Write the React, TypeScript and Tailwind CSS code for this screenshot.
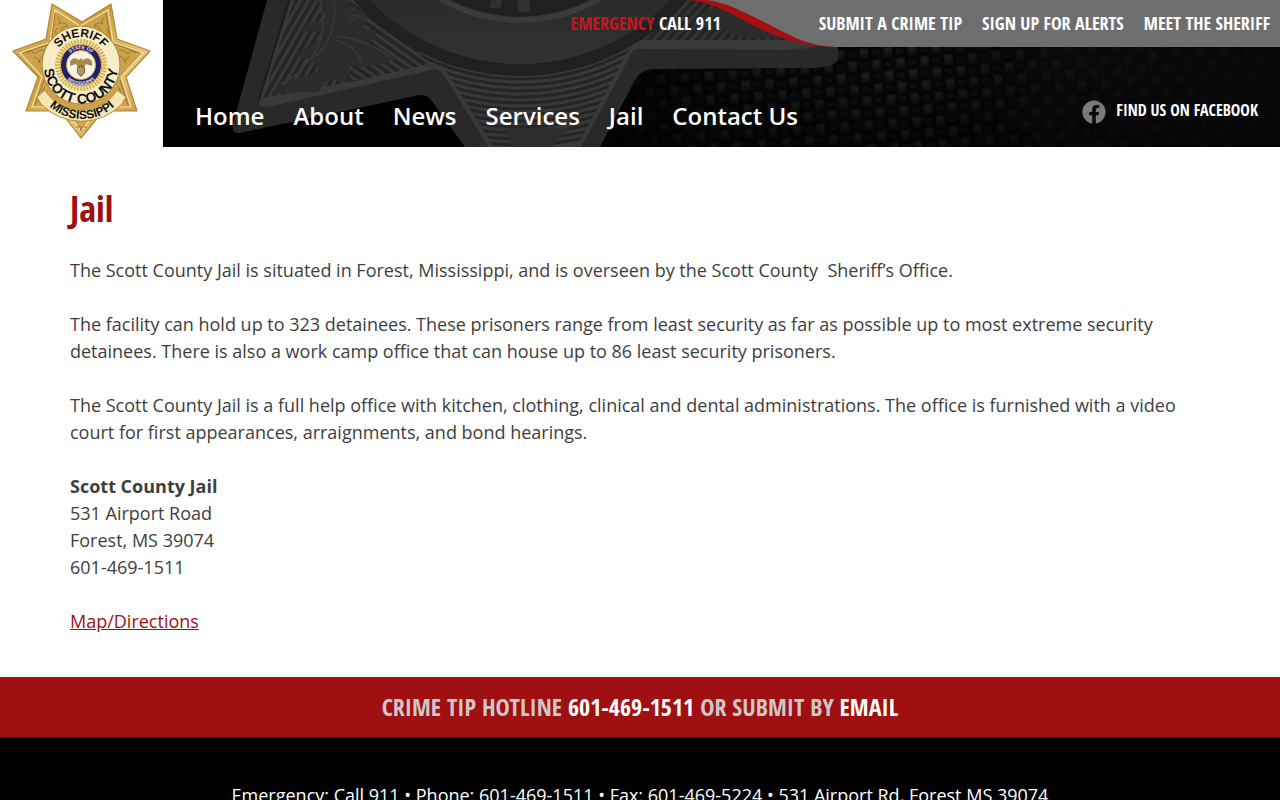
import { FaFacebook } from "react-icons/fa";

const quickLinks = ["Submit a Crime Tip", "Sign Up for Alerts", "Meet the Sheriff"];
const navItems = ["Home", "About", "News", "Services", "Jail", "Contact Us"];

const stripeRadii = [224, 230, 236, 242, 248, 254, 260, 266, 272, 278, 284, 290];
const sunRays = Array.from({ length: 48 }, (_, i) => i * 7.5);

function HeaderArt() {
  return (
    <svg
      className="absolute inset-0 h-full w-full"
      viewBox="0 0 1280 147"
      preserveAspectRatio="xMidYMin slice"
      aria-hidden="true"
    >
      <defs>
        <pattern id="weave" width="24" height="24" patternUnits="userSpaceOnUse" patternTransform="rotate(-4)">
          <rect width="24" height="24" fill="#070707" />
          <g filter="url(#soft)">
            <rect x="2" y="1" width="8" height="10" fill="url(#block)" />
            <rect x="14" y="13" width="8" height="10" fill="url(#block)" />
            <rect x="14" y="3" width="7" height="5" fill="#0f0f0f" />
            <rect x="2" y="15" width="7" height="5" fill="#0f0f0f" />
          </g>
        </pattern>
        <filter id="soft">
          <feGaussianBlur stdDeviation="1" />
        </filter>
        <linearGradient id="block" x1="0" y1="0" x2="0" y2="1">
          <stop offset="0" stopColor="#242424" />
          <stop offset="1" stopColor="#0e0e0e" />
        </linearGradient>
        <linearGradient id="fade">
          <stop offset="0.45" stopColor="#000" />
          <stop offset="0.56" stopColor="#000" stopOpacity="0.2" />
          <stop offset="0.72" stopColor="#000" stopOpacity="0" />
          <stop offset="0.82" stopColor="#0a0a0a" stopOpacity="0.6" />
          <stop offset="1" stopColor="#080808" stopOpacity="0.9" />
        </linearGradient>
        <linearGradient id="depth" x1="0" y1="0" x2="0" y2="1">
          <stop offset="0.5" stopColor="#000" stopOpacity="0" />
          <stop offset="1" stopColor="#000" stopOpacity="0.4" />
        </linearGradient>
        <linearGradient id="night" x1="0" y1="0" x2="0" y2="1">
          <stop offset="0" stopColor="#0b0c10" />
          <stop offset="0.7" stopColor="#000" />
        </linearGradient>
        <linearGradient id="disc" x1="0" y1="0" x2="0" y2="1">
          <stop offset="0.65" stopColor="#232323" />
          <stop offset="1" stopColor="#313131" />
        </linearGradient>
        <pattern id="hatchLeft" width="7" height="7" patternUnits="userSpaceOnUse" patternTransform="rotate(-60)">
          <rect width="7" height="7" fill="#252525" />
          <rect width="7" height="3" fill="#383838" />
        </pattern>
        <pattern id="hatchSide" width="7" height="7" patternUnits="userSpaceOnUse" patternTransform="rotate(35)">
          <rect width="7" height="7" fill="#252525" />
          <rect width="7" height="3" fill="#383838" />
        </pattern>
        <pattern id="hatchRight" width="7" height="7" patternUnits="userSpaceOnUse" patternTransform="rotate(-48)">
          <rect width="7" height="7" fill="#252525" />
          <rect width="7" height="3" fill="#343434" />
        </pattern>
        <clipPath id="lowerArm">
          <path d="M430 66 L444 69 L494 147 H578 L631 48 L640 30 H400 Z" />
        </clipPath>
      </defs>

      <rect width="1280" height="147" fill="url(#night)" />
      <rect x="560" width="720" height="147" fill="url(#weave)" />
      <rect width="1280" height="147" fill="url(#fade)" />
      <rect x="560" width="720" height="147" fill="url(#depth)" />

      <path
        d="M267 0 L233 124 Q231 134 240 133 L415 96 Q426 93 431 100 L465 147 H600 L635 80 Q641 69 654 69 L810 68 Q838 67 838 58 V44 L700 0 Z"
        fill="#292929"
      />
      <path
        d="M291 0 L260 98 Q257 109 268 107 L436 69 L443 73 L489 147 H581 L632 52 Q636 48 645 49 L780 50 Q806 50 826 44 L700 0 Z"
        fill="#393939"
      />
      <path d="M289 0 L259 100" stroke="#1d1d1d" strokeWidth="2" />
      <path d="M294 0 L263 98 L360 80 V0 Z" fill="url(#hatchLeft)" />
      <path d="M350 0 L350 82 L425 65 L440 50 L370 0 Z" fill="url(#hatchSide)" />
      <path d="M640 40 L660 0 H700 L800 40 Z" fill="url(#hatchRight)" />
      <g fill="#2c2c2c">
        <path d="M314 0 Q332 8 322 22 Q306 20 300 32 Q316 28 326 36 Q310 44 296 56 Q316 60 322 72 Q300 74 270 93 L318 92 Q324 80 334 80 Q350 86 350 66 Q366 70 392 60 Q380 44 366 46 Q388 30 362 28 Q376 12 352 10 L348 0 Z" />
        <path d="M700 14 Q716 4 726 12 Q738 16 750 22 Q760 32 786 38 L748 38 Q732 36 724 28 Q708 30 700 14 Z" />
      </g>
      <g fill="none" stroke="#393939" strokeWidth="1.5">
        <path d="M320 0 Q330 40 306 64 Q296 78 280 84" />
        <path d="M334 0 Q338 34 316 56" />
        <path d="M336 40 Q356 46 362 64" />
        <path d="M337 36 Q370 40 394 60" />
        <path d="M350 16 Q360 14 366 22 M348 24 L356 18" />
      </g>

      <g clipPath="url(#lowerArm)">
        <rect x="400" y="40" width="260" height="107" fill="#383838" />
        <g fill="none" stroke="#252525" strokeWidth="3">
          {stripeRadii.map((r) => (
            <circle key={r} cx="520" cy="-145" r={r} />
          ))}
        </g>
        <path d="M503 128 H570 L552 147 H514 Z" fill="#2d2d2d" />
      </g>
      <path d="M443 70 L491 147 M632 48 L579 147" stroke="#393939" strokeWidth="4" />

      <circle cx="520" cy="-145" r="221" fill="#202020" />
      <circle cx="520" cy="-145" r="209" fill="url(#disc)" />
      <circle cx="520" cy="-138" r="158" fill="#202020" stroke="#3a3a3a" strokeWidth="6" />
      <path d="M491 0 H502 L500 8 H489 Z M517 0 H530 V12 H519 Z" fill="#303030" />
    </svg>
  );
}

function SheriffBadge() {
  return (
    <svg className="h-[147px] w-[163px]" viewBox="0 0 163 147" role="img" aria-label="Scott County Sheriff badge">
      <defs>
        <linearGradient id="gold" x1="0" y1="0" x2="1" y2="1">
          <stop offset="0" stopColor="#e3c172" />
          <stop offset="0.35" stopColor="#c99a3c" />
          <stop offset="0.65" stopColor="#e6c67b" />
          <stop offset="1" stopColor="#b5822b" />
        </linearGradient>
        <path id="arcSheriff" d="M53 65 A28 28 0 0 1 109 65" />
        <path id="arcCounty" d="M45 58 A37 37 0 1 0 117 58" />
        <path id="arcState" d="M34 71 A48 48 0 0 0 130 71" />
        <path id="arcSealTop" d="M65 65 A16 16 0 0 1 97 65" />
        <path id="arcSealLow" d="M61 65 A20 20 0 0 0 101 65" />
      </defs>
      <path
        d="M52 4 L82 22 L111 4 L117 39 L150 51 L126 77 L137 111 L103 111 L81 138 L60 111 L26 111 L38 77 L13 51 L46 39 Z"
        fill="url(#gold)"
        stroke="#b28334"
        strokeWidth="1.2"
        strokeLinejoin="round"
      />
      <path
        d="M55 10 L80 26 L108 10 L113 42 L143 53 L121 77 L131 107 L100 107 L81 131 L63 107 L32 107 L42 77 L20 53 L50 42 Z"
        fill="#cda24c"
        stroke="#f6e2a5"
        strokeWidth="1.2"
      />
      <g fill="none" stroke="#9b742c" strokeWidth="1">
        <path d="M55 13 L52 38 M106 13 L111 42 M23 53 L50 44 M140 53 L115 44 M35 105 L44 80 M128 105 L120 80" />
        <path d="M57 17 q5 3 2 7 q5 -3 9 2 q-7 0 -6 5 M58 28 q-4 2 -2 6 M105 17 q-5 3 -2 7 q-5 -3 -9 2 q7 0 6 5 M106 29 q4 2 1 6" />
        <path d="M27 53 q5 -4 8 1 q4 -5 9 -4 M34 57 q4 0 5 6 q0 -6 6 -7 M136 53 q-5 -4 -8 1 q-4 -5 -9 -4 M130 57 q-4 0 -5 6 q0 -6 -6 -7" />
        <path d="M36 101 q3 -7 8 -5 q-3 -5 1 -9 M127 101 q-3 -7 -8 -5 q3 -5 -1 -9 M76 128 q5 -4 5 3 q0 -7 6 -3" />
      </g>

      <path
        d="M37 97 L45 90 A42 42 0 0 0 117 90 L126 97 L122 104 A56 56 0 0 1 41 104 Z"
        fill="#f5e6b4"
        stroke="#b58a3c"
        strokeWidth="1"
      />
      <circle cx="81" cy="65" r="39" fill="#f8edc8" stroke="#b58a3c" strokeWidth="1.2" />
      <circle cx="81" cy="65" r="26" fill="#f3dc95" />
      <g stroke="#c79b45" strokeWidth="1">
        {sunRays.map((angle) => (
          <path key={angle} d="M81 39 V45" transform={`rotate(${angle} 81 65)`} />
        ))}
      </g>
      <circle cx="81" cy="65" r="20.5" fill="#231f66" stroke="#d6ad52" strokeWidth="1" />
      <circle cx="81" cy="65" r="14.5" fill="#f7f3e8" stroke="#d6ad52" strokeWidth="1" />
      <path
        d="M70 61 Q74 56 79 60 L81 58 L83 60 Q88 56 92 61 L92 66 L86 64 L84 68 H78 L76 64 L70 66 Z"
        fill="#a98a4c"
      />
      <path d="M77 68 Q81 62 85 68 V73 L81 77 L77 73 Z" fill="#8b6b30" />
      <path d="M79 68 V74 M81 67 V75 M83 68 V74" stroke="#f2e7c6" strokeWidth="0.7" />

      <g fontFamily="Liberation Sans, sans-serif" fontWeight="bold" textAnchor="middle" fill="#111">
        <text fontSize="12">
          <textPath href="#arcSheriff" startOffset="50%">SHERIFF</textPath>
        </text>
        <text fontSize="14">
          <textPath href="#arcCounty" startOffset="50%">SCOTT COUNTY</textPath>
        </text>
        <text fontSize="12">
          <textPath href="#arcState" startOffset="50%">MISSISSIPPI</textPath>
        </text>
        <g fill="#e8e4f4" fontSize="5">
          <text>
            <textPath href="#arcSealTop" startOffset="50%">STATE OF</textPath>
          </text>
          <text>
            <textPath href="#arcSealLow" startOffset="50%">MISSISSIPPI</textPath>
          </text>
        </g>
      </g>
    </svg>
  );
}

function QuickLinks() {
  return (
    <nav className="relative pr-[10px]" aria-label="Quick links">
      <svg className="absolute top-0 right-0 h-[47px] w-[592px]" viewBox="0 0 592 47" aria-hidden="true">
        <path d="M0 0 C24 2 40 12 66 26 C96 40 116 46 144 47 H160 V0 Z" fill="#a50f12" />
        <path d="M18 0 C38 2 56 12 80 24 C106 38 122 46 148 47 H592 V0 Z" fill="#6e6e6e" />
      </svg>
      <ul className="relative flex gap-5">
        {quickLinks.map((label) => (
          <li key={label}>
            <a href="#">{label}</a>
          </li>
        ))}
      </ul>
    </nav>
  );
}

function Header() {
  return (
    <header className="relative flex bg-black text-white">
      <HeaderArt />
      <a href="#" className="relative shrink-0 bg-white">
        <SheriffBadge />
      </a>
      <div className="relative flex grow flex-col justify-between">
        <div className="flex h-[47px] items-center justify-end gap-[98px] font-['Open_Sans_Condensed','Open_Sans',sans-serif] text-lg leading-[47px] font-bold whitespace-nowrap uppercase">
          <p>
            <span className="text-[#c4161c]">Emergency</span> Call 911
          </p>
          <QuickLinks />
        </div>
        <div className="flex items-start justify-between pr-[22px] pb-[13px] pl-8">
          <nav aria-label="Main">
            <ul className="flex gap-[29px] text-2xl leading-9 font-semibold">
              {navItems.map((label) => (
                <li key={label}>
                  <a href="#">{label}</a>
                </li>
              ))}
            </ul>
          </nav>
          <a
            href="#"
            className="flex items-center gap-[10px] font-['Open_Sans_Condensed','Open_Sans',sans-serif] text-base leading-6 font-bold uppercase"
          >
            <FaFacebook className="size-6 text-[#7a7a7a]" />
            <span className="pb-1">Find us on Facebook</span>
          </a>
        </div>
      </div>
    </header>
  );
}

export default function App() {
  return (
    <div className="bg-white font-['Open_Sans',sans-serif] text-lg leading-[27px] text-[#3e3e3e]">
      <Header />

      <main className="mx-auto max-w-[1280px] px-[70px] pt-[35px] pb-[42px]">
        <h1 className="mb-[21px] font-['Open_Sans_Condensed','Open_Sans',sans-serif] text-4xl leading-[54px] font-bold text-[#a00f11]">
          Jail
        </h1>
        <div className="flex flex-col gap-[27px]">
          <p>
            The Scott County Jail is situated in Forest, Mississippi, and is overseen by the Scott County&nbsp; Sheriff’s
            Office.
          </p>
          <p>
            The facility can hold up to 323 detainees. These prisoners range from least security as far as possible up to
            most extreme security detainees. There is also a work camp office that can house up to 86 least security
            prisoners.
          </p>
          <p>
            The Scott County Jail is a full help office with kitchen, clothing, clinical and dental administrations. The
            office is furnished with a video court for first appearances, arraignments, and bond hearings.
          </p>
          <address className="not-italic">
            <strong>Scott County Jail</strong>
            <br />
            531 Airport Road
            <br />
            Forest, MS 39074
            <br />
            601-469-1511
          </address>
          <p>
            <a href="#" className="text-[#a00f11] underline">
              Map/Directions
            </a>
          </p>
        </div>
      </main>

      <section className="bg-[#a00f11] text-center font-['Open_Sans_Condensed','Open_Sans',sans-serif] text-2xl leading-[60px] font-bold text-[#cfc8c8] uppercase">
        Crime tip hotline{" "}
        <a href="tel:601-469-1511" className="text-white">
          601-469-1511
        </a>{" "}
        or submit by{" "}
        <a href="#" className="text-white">
          Email
        </a>
      </section>

      <footer className="bg-black px-[70px] pt-[45px] pb-12 text-center text-white">
        <p>Emergency: Call 911 • Phone: 601-469-1511 • Fax: 601-469-5224 • 531 Airport Rd, Forest MS 39074</p>
      </footer>
    </div>
  );
}
